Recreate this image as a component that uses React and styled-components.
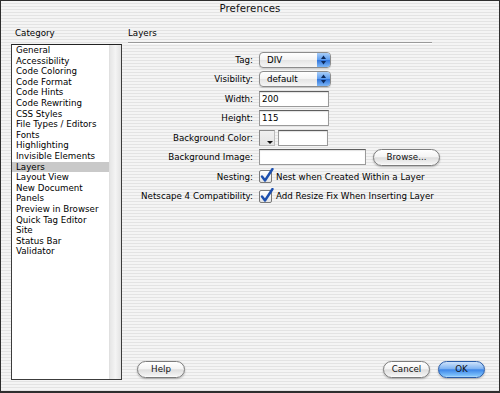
import React from "react";
import styled, { createGlobalStyle } from "styled-components";

const GlobalStyle = createGlobalStyle`
  html, body {
    margin: 0;
    padding: 0;
    background: #ffffff;
  }
  body {
    font-family: "DejaVu Sans", "Noto Sans", sans-serif;
    font-size: 8.7px;
    color: #000;
  }
`;

const pinstripe = `repeating-linear-gradient(
  to bottom,
  #f4f4f4 0px,
  #f4f4f4 2px,
  #e3e3e3 2px,
  #e3e3e3 3px
)`;

const Window = styled.div`
  box-sizing: border-box;
  width: 500px;
  height: 393px;
  border: 1px solid #2e2e2e;
  border-bottom-width: 2px;
  background: ${pinstripe};
  display: flex;
  flex-direction: column;
`;

const TitleBar = styled.div`
  height: 17px;
  line-height: 16px;
  text-align: center;
  font-size: 10.2px;
  color: #111;
  letter-spacing: 0.1px;
`;

const Body = styled.div`
  flex: 1;
  display: flex;
  min-height: 0;
`;

const Sidebar = styled.div`
  width: 111px;
  padding: 9px 0 11px 10px;
  display: flex;
  flex-direction: column;
`;

const GroupLabel = styled.div`
  height: 12px;
  line-height: 12px;
  padding-left: ${(p) => p.$indent || 0}px;
  margin-bottom: 5px;
`;

const ListBox = styled.div`
  flex: 1;
  display: flex;
  border: 1px solid #3c3c3c;
  border-top-color: #222;
  background: #fff;
`;

const Items = styled.ul`
  flex: 1;
  list-style: none;
  margin: 0;
  padding: 0;
`;

const Item = styled.li`
  height: 10.6px;
  line-height: 10.6px;
  padding-left: 4px;
  white-space: nowrap;
  background: ${(p) => (p.$selected ? "#c9c9c9" : "transparent")};
`;

const ScrollTrack = styled.div`
  width: 11px;
  background: linear-gradient(to right, #e6e6e6, #f4f4f4 50%, #e2e2e2);
  border-left: 1px solid #e0e0e0;
`;

const Main = styled.div`
  flex: 1;
  display: flex;
  flex-direction: column;
  padding: 9px 14px 13px 6px;
`;

const Separator = styled.div`
  width: 304px;
  height: 0;
  border-top: 1px solid #9a9a9a;
  border-bottom: 1px solid #ffffff;
  margin: -2px 0 6px;
`;

const Form = styled.div`
  display: grid;
  grid-template-columns: 125px auto;
  grid-auto-rows: 19.5px;
  column-gap: 6px;
  align-items: center;
`;

const Label = styled.div`
  text-align: right;
  white-space: nowrap;
`;

const Field = styled.div`
  display: flex;
  align-items: center;
  gap: ${(p) => p.$gap || 0}px;
`;

const Select = styled.div`
  box-sizing: border-box;
  position: relative;
  width: 72px;
  height: 16px;
  line-height: 14px;
  padding-left: 7px;
  border: 1px solid #8c8c8c;
  border-radius: 4px;
  background: linear-gradient(to bottom, #ffffff, #f3f3f3 50%, #e4e4e4 51%, #f6f6f6);
  box-shadow: 0 1px 1px rgba(0, 0, 0, 0.15);
`;

const Stepper = styled.div`
  position: absolute;
  top: 0;
  right: 0;
  bottom: 0;
  width: 13px;
  border-radius: 0 3px 3px 0;
  background: linear-gradient(to bottom, #a8cdf8, #5b9cf0 50%, #2f74dc 51%, #7db6f6);
  display: flex;
  align-items: center;
  justify-content: center;
`;

const TextInput = styled.div`
  box-sizing: border-box;
  width: ${(p) => p.$w}px;
  height: 16px;
  line-height: 14px;
  padding-left: 2px;
  background: #fff;
  border: 1px solid #9a9a9a;
  border-top-color: #5e5e5e;
  box-shadow: inset 0 1px 1px rgba(0, 0, 0, 0.12);
`;

const Swatch = styled.div`
  box-sizing: border-box;
  position: relative;
  width: 16px;
  height: 16px;
  border: 1px solid #8a8a8a;
  border-right-color: #bcbcbc;
  border-bottom-color: #bcbcbc;
  background: linear-gradient(to bottom, #f0f0f0, #e4e4e4);

  &::after {
    content: "";
    position: absolute;
    right: 1px;
    bottom: 1px;
    border-left: 3px solid transparent;
    border-right: 3px solid transparent;
    border-top: 3px solid #111;
  }
`;

const AquaButton = styled.div`
  box-sizing: border-box;
  width: ${(p) => p.$w}px;
  height: 17px;
  line-height: 15px;
  text-align: center;
  border-radius: 9px;
  border: 1px solid ${(p) => (p.$primary ? "#2a5ca8" : "#7c7c7c")};
  background: ${(p) =>
    p.$primary
      ? "linear-gradient(to bottom, #cfe3fb, #7fb3f2 45%, #3d86e8 52%, #7cc0fb 90%, #b5dcfc)"
      : "linear-gradient(to bottom, #ffffff, #f4f4f4 45%, #dedede 52%, #f2f2f2 90%, #ffffff)"};
  box-shadow: 0 1px 2px rgba(0, 0, 0, 0.28);
  color: #111;
  margin-left: ${(p) => p.$ml || 0}px;
`;

const CheckRow = styled.div`
  display: flex;
  align-items: center;
  gap: 4px;
  white-space: nowrap;
`;

const CheckBox = styled.div`
  box-sizing: border-box;
  position: relative;
  width: 13px;
  height: 13px;
  border: 1px solid #7a7a7a;
  border-radius: 2px;
  background: linear-gradient(to bottom, #ffffff, #e4e4e4);

  svg {
    position: absolute;
    left: 0;
    top: -3px;
  }
`;

const Spacer = styled.div`
  flex: 1;
`;

const Footer = styled.div`
  display: flex;
  align-items: center;
  padding-left: 9px;
`;

const categories = [
  "General",
  "Accessibility",
  "Code Coloring",
  "Code Format",
  "Code Hints",
  "Code Rewriting",
  "CSS Styles",
  "File Types / Editors",
  "Fonts",
  "Highlighting",
  "Invisible Elements",
  "Layers",
  "Layout View",
  "New Document",
  "Panels",
  "Preview in Browser",
  "Quick Tag Editor",
  "Site",
  "Status Bar",
  "Validator",
];

const StepperArrows = () => (
  <svg width="7" height="10" viewBox="0 0 7 10">
    <path d="M3.5 0.5 L6 4 L1 4 Z" fill="#0d2a5c" />
    <path d="M3.5 9.5 L6 6 L1 6 Z" fill="#0d2a5c" />
  </svg>
);

const PopUp = ({ value }) => (
  <Select>
    {value}
    <Stepper>
      <StepperArrows />
    </Stepper>
  </Select>
);

const Check = ({ children }) => (
  <CheckRow>
    <CheckBox>
      <svg width="14" height="15" viewBox="0 0 14 15">
        <path
          d="M2 8.5 L5 12.5 L12.5 1"
          fill="none"
          stroke="#1d4fae"
          strokeWidth="2.4"
          strokeLinecap="round"
          strokeLinejoin="round"
        />
      </svg>
    </CheckBox>
    {children}
  </CheckRow>
);

export default function App() {
  return (
    <>
      <GlobalStyle />
      <Window>
        <TitleBar>Preferences</TitleBar>
        <Body>
          <Sidebar>
            <GroupLabel $indent={4}>Category</GroupLabel>
            <ListBox>
              <Items>
                {categories.map((c) => (
                  <Item key={c} $selected={c === "Layers"}>
                    {c}
                  </Item>
                ))}
              </Items>
              <ScrollTrack />
            </ListBox>
          </Sidebar>

          <Main>
            <GroupLabel>Layers</GroupLabel>
            <Separator />
            <Form>
              <Label>Tag:</Label>
              <Field>
                <PopUp value="DIV" />
              </Field>

              <Label>Visibility:</Label>
              <Field>
                <PopUp value="default" />
              </Field>

              <Label>Width:</Label>
              <Field>
                <TextInput $w={70}>200</TextInput>
              </Field>

              <Label>Height:</Label>
              <Field>
                <TextInput $w={70}>115</TextInput>
              </Field>

              <Label>Background Color:</Label>
              <Field $gap={3}>
                <Swatch />
                <TextInput $w={50} />
              </Field>

              <Label>Background Image:</Label>
              <Field>
                <TextInput $w={107} />
                <AquaButton $w={67} $ml={7}>
                  Browse...
                </AquaButton>
              </Field>

              <Label>Nesting:</Label>
              <Field>
                <Check>Nest when Created Within a Layer</Check>
              </Field>

              <Label>Netscape 4 Compatibility:</Label>
              <Field>
                <Check>Add Resize Fix When Inserting Layer</Check>
              </Field>
            </Form>

            <Spacer />

            <Footer>
              <AquaButton $w={48}>Help</AquaButton>
              <Spacer />
              <AquaButton $w={47}>Cancel</AquaButton>
              <AquaButton $w={47} $ml={8} $primary>
                OK
              </AquaButton>
            </Footer>
          </Main>
        </Body>
      </Window>
    </>
  );
}
